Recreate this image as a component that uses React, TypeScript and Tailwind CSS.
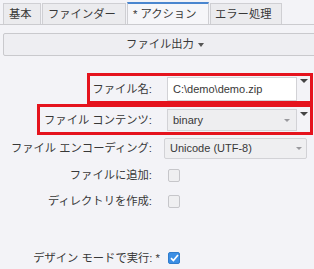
export default function App() {
  const font = "font-['Liberation_Sans','Noto_Sans_CJK_JP',sans-serif]";
  return (
    <div
      className={`relative w-[314px] h-[269px] overflow-hidden bg-[#f3f3f7] text-[11px] text-[#383838] ${font}`}
    >
      {/* tabs */}
      <div className="flex items-end pt-[3px] pl-[3px] border-b border-[#cbcbcf] h-[25px] text-[11.3px]">
        <div className="w-[38px] h-[21px] pl-[5px] flex items-center border border-b-0 border-[#cfcfd3] bg-[#ebebee]">
          基本
        </div>
        <div className="ml-px w-[84px] h-[21px] pl-[5px] flex items-center border border-b-0 border-[#cfcfd3] bg-[#ebebee]">
          ファインダー
        </div>
        <div className="ml-px w-[82px] h-[22px] pl-[5px] flex items-center border-x border-[#cfcfd3] border-t-2 border-t-[#4a86cf] bg-[#f6f6f9]">
          * アクション
        </div>
        <div className="ml-px w-[72px] h-[21px] pl-[4px] flex items-center border border-b-0 border-[#cfcfd3] bg-[#ebebee]">
          エラー処理
        </div>
      </div>

      {/* section button */}
      <div className="mt-[8px] ml-[3px] w-[324px] h-[23px] flex items-center justify-center gap-[4px] border border-[#c9c9cd] rounded-[2px] bg-[#eeeef2] text-[11.3px]">
        <span>ファイル出力</span>
        <span className="w-0 h-0 border-x-[3px] border-x-transparent border-t-[4px] border-t-[#555]" />
      </div>

      {/* form */}
      <div className="flex flex-col">
        <div className="mt-[21px] flex items-start h-[24px]">
          <div className="w-[152px] h-full flex items-center justify-end text-[11.3px]">ファイル名:</div>
          <div className="ml-[15px] w-[130px] h-[24px] flex items-center pl-[5px] bg-white border border-[#d2d2d6]">
            C:\demo\demo.zip
          </div>
          <span className="ml-[3px] mt-[2px] w-0 h-0 border-x-[4px] border-x-transparent border-t-[4px] border-t-[#444]" />
        </div>

        <div className="mt-[8px] flex items-start h-[22px]">
          <div className="w-[152px] h-full flex items-center justify-end text-[11.3px]">ファイル コンテンツ:</div>
          <div className="ml-[15px] w-[130px] h-[22px] flex items-center justify-between pl-[5px] pr-[6px] bg-[#eeeef0] border border-[#d2d2d6]">
            <span>binary</span>
            <span className="w-0 h-0 border-x-[3px] border-x-transparent border-t-[3px] border-t-[#9a9a9e]" />
          </div>
          <span className="ml-[3px] mt-[3px] w-0 h-0 border-x-[4px] border-x-transparent border-t-[4px] border-t-[#444]" />
        </div>

        <div className="mt-[7px] flex items-center h-[21px]">
          <div className="w-[152px] text-right text-[11.3px]">ファイル エンコーディング:</div>
          <div className="ml-[12px] w-[143px] h-[21px] flex items-center justify-between pl-[5px] pr-[4px] bg-[#efeff1] border border-[#d2d2d6] rounded-[2px]">
            <span>Unicode (UTF-8)</span>
            <span className="w-0 h-0 border-x-[3px] border-x-transparent border-t-[3px] border-t-[#9a9a9e]" />
          </div>
        </div>

        <div className="flex items-center h-[32px]">
          <div className="w-[152px] text-right text-[11.3px]">ファイルに追加:</div>
          <div className="ml-[16px] w-[12px] h-[13px] rounded-[2px] border border-[#c6c6ca] bg-[#efeff1]" />
        </div>

        <div className="flex items-center h-[20px]">
          <div className="w-[152px] text-right text-[11.3px]">ディレクトリを作成:</div>
          <div className="ml-[16px] w-[12px] h-[13px] rounded-[2px] border border-[#c6c6ca] bg-[#efeff1]" />
        </div>

        <div className="mt-[37px] flex items-center h-[20px]">
          <div className="w-[160px] text-right text-[11.3px]">デザイン モードで実行: *</div>
          <div className="ml-[8px] w-[12px] h-[12px] rounded-[2px] bg-[#3b8ee4] border border-[#2f7ccc] flex items-center justify-center">
            <svg width="9" height="8" viewBox="0 0 9 8">
              <path d="M1 4.2 L3.4 6.5 L8 1" fill="none" stroke="white" strokeWidth="1.7" />
            </svg>
          </div>
        </div>
      </div>

      {/* red annotation boxes */}
      <div className="absolute left-[87px] top-[73px] w-[226px] h-[31px] border-[3px] border-[#e5131d]" />
      <div className="absolute left-[37px] top-[104px] w-[276px] h-[31px] border-[3px] border-[#e5131d]" />
    </div>
  );
}
